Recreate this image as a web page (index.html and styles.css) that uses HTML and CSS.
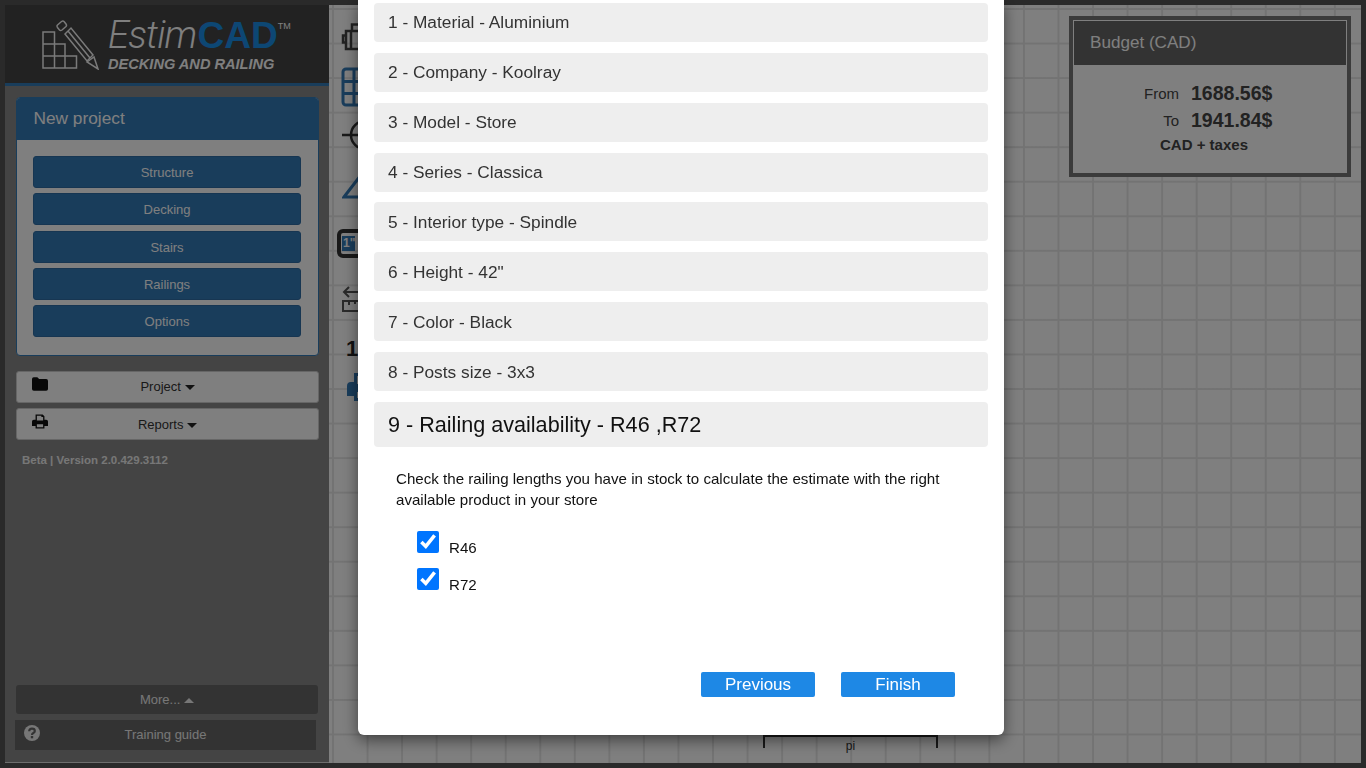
FILE: index.html
```html
<!DOCTYPE html>
<html lang="en">
<head>
    <meta charset="UTF-8">
    <meta name="viewport" content="width=device-width, initial-scale=1.0">
    <title>EstimCAD - Decking and railing</title>
    <link rel="stylesheet" href="styles.css">
</head>
<body>
    <div class="app">
        <aside class="sidebar">
            <header class="logo">
                <svg class="logo-mark" viewBox="0 0 58 50" width="58" height="50" fill="none" stroke="currentColor" stroke-width="1.500">
                    <path d="M1 12h11.500v36H1zM1 24h22v24M1 36h33.500v12H1M12.500 24v24M23 36v12"/>
                    <path d="M15.500 5l4-3.500q1.500-1 2.500 0l2 2.500q1 1.500 0 2.500l-4 3.500q-1.500 1-2.500 0l-2-2.500q-1-1.500 0-2.500z"/>
                    <path d="M23 14l6-6 22 27-6 6zM26 11l22 27"/>
                    <path d="M45 42l7-5 4 12z"/>
                </svg>
                <div class="logo-text">
                    <div class="logo-name">Estim<b>CAD</b><sup>TM</sup></div>
                    <div class="logo-sub">DECKING AND RAILING</div>
                </div>
            </header>

            <section class="panel">
                <div class="panel-heading">New project</div>
                <div class="panel-body">
                    <a class="btn-primary">Structure</a>
                    <a class="btn-primary">Decking</a>
                    <a class="btn-primary">Stairs</a>
                    <a class="btn-primary">Railings</a>
                    <a class="btn-primary">Options</a>
                </div>
            </section>

            <a class="btn-default">
                <svg class="btn-icon" viewBox="0 0 18 15" width="16" height="14"><path fill="currentColor" d="M0 2q0-2 2-2h4l2 2h8q2 0 2 2v9q0 2-2 2H2q-2 0-2-2z"/></svg>
                Project <span class="caret"></span>
            </a>
            <a class="btn-default btn-reports">
                <svg class="btn-icon" viewBox="0 0 18 16" width="16" height="15"><path fill="currentColor" fill-rule="evenodd" d="M4 0h8l2 2v4h2q2 0 2 2v5h-4v3H4v-3H0V8q0-2 2-2h2zM5.500 1.500V7h7V3h-2V1.500zM5.500 11v3.500h7V11z"/></svg>
                Reports <span class="caret"></span>
            </a>
            <div class="version">Beta | Version 2.0.429.3112</div>

            <a class="btn-dark btn-more">More... <span class="caret caret-up"></span></a>
            <a class="btn-dark btn-training">
                <svg class="help-icon" viewBox="0 0 16 16" width="16" height="16"><circle cx="8" cy="8" r="8" fill="currentColor"/><path fill="none" stroke="#666" stroke-width="2.200" d="M5.200 6.200q0-2.500 2.800-2.500t2.800 2.300q0 1.300-1.500 2.100Q8 8.700 8 10"/><rect x="6.800" y="11" width="2.400" height="2.300" fill="#666"/></svg>
                Training guide
            </a>
        </aside>

        <main class="canvas">
            <div class="toolbar">
                <svg class="tool tool-device" viewBox="0 0 40 28" width="40" height="28" fill="none" stroke="#444" stroke-width="2.500"><path d="M5 8h28v18H5zM5 12.500H2v7h3M11 8V1.500h16V8M10 8v18"/></svg>
                <svg class="tool tool-grid" viewBox="0 0 40 40" width="40" height="40" fill="none" stroke="#337ab7" stroke-width="3"><rect x="2" y="2" width="36" height="36" rx="3"/><path d="M2 14.500h36M2 26.500h36M13 2v36M26 2v36"/></svg>
                <svg class="tool tool-circle" viewBox="0 0 40 32" width="40" height="32" fill="none" stroke="#333" stroke-width="2.500"><circle cx="24" cy="16" r="14"/><path d="M1 16h36M24 2v28"/></svg>
                <svg class="tool tool-triangle" viewBox="0 0 40 30" width="40" height="30" fill="none" stroke="#337ab7" stroke-width="3"><path d="M2 27L22 1v26z"/></svg>
                <div class="tool tool-unit"><span>1"</span></div>
                <svg class="tool tool-ruler" viewBox="0 0 40 28" width="40" height="28" fill="none" stroke="#555" stroke-width="2"><path d="M2 6h36M7 1L2 6l5 5M1 15h38v10H1zM7 15v4M13 15v3M19 15v4M25 15v3"/></svg>
                <div class="tool tool-scale">1:4</div>
                <svg class="tool tool-print" viewBox="0 0 40 28" width="40" height="28"><path fill="#337ab7" fill-rule="evenodd" d="M7 0h22v9h5q4 0 4 4v10h-8v5H7v-5H0V13q0-4 4-4h3zM10 3v8h16V3zM10 19v6h16v-6z"/></svg>
            </div>

            <section class="budget">
                <div class="budget-heading">Budget (CAD)</div>
                <div class="budget-row"><span>From</span><b>1688.56$</b></div>
                <div class="budget-row"><span>To</span><b>1941.84$</b></div>
                <div class="budget-note">CAD + taxes</div>
            </section>

            <div class="dimension"><span>pi</span></div>
        </main>
    </div>

    <div class="overlay">
        <div class="modal">
            <div class="step">1 - Material - Aluminium</div>
            <div class="step">2 - Company - Koolray</div>
            <div class="step">3 - Model - Store</div>
            <div class="step">4 - Series - Classica</div>
            <div class="step step-low">5 - Interior type - Spindle</div>
            <div class="step step-low">6 - Height - 42"</div>
            <div class="step step-low">7 - Color - Black</div>
            <div class="step step-low">8 - Posts size - 3x3</div>
            <div class="step step-active">9 - Railing availability - R46 ,R72</div>

            <div class="step-content">
                <p>Check the railing lengths you have in stock to calculate the estimate with the right available product in your store</p>
                <label class="check"><input type="checkbox" checked><span>R46</span></label>
                <label class="check"><input type="checkbox" checked><span>R72</span></label>
            </div>

            <div class="actions">
                <button class="btn-modal">Previous</button>
                <button class="btn-modal">Finish</button>
            </div>
        </div>
    </div>
</body>
</html>
```

FILE: styles.css
```css
* {
    box-sizing: border-box;
}
body {
    font-family: "Liberation Sans", Arial, sans-serif;
    background-color: #555;
    color: #333;
    margin: 0;
    height: 768px;
    overflow: hidden;
}
.app {
    display: flex;
    height: 763px;
    padding: 5px 5px 0;
}

/* left column */
.sidebar {
    width: 324px;
    flex: none;
    display: flex;
    flex-direction: column;
    background-color: #888;
    border-bottom: 1px solid #ddd;
    font-size: 13px;
}
.logo {
    height: 81px;
    flex: none;
    display: flex;
    background-color: #444;
    border-bottom: 3px solid #337ab7;
    color: #fff;
}
.logo-mark {
    margin: 15px 0 0 37px;
    color: #f4f4f4;
}
.logo-text {
    margin-left: 8px;
}
.logo-name {
    font-family: Roboto, "Liberation Sans", sans-serif;
    font-size: 38px;
    font-weight: 300;
    font-style: italic;
    letter-spacing: -0.800px;
    line-height: 42px;
    margin-top: 9px;
    white-space: nowrap;
}
.logo-name b {
    font-family: "Liberation Sans", Arial, sans-serif;
    font-style: normal;
    font-weight: bold;
    color: #1b8fe8;
    font-size: 37px;
    letter-spacing: 0;
    margin-left: 1px;
}
.logo-name sup {
    font-family: "Liberation Sans", Arial, sans-serif;
    font-size: 9px;
    font-style: normal;
    font-weight: normal;
    letter-spacing: 0;
    vertical-align: 19px;
    line-height: 0;
}
.logo-sub {
    font-size: 14.600px;
    font-weight: bold;
    font-style: italic;
    line-height: 16px;
    margin-top: -1px;
    white-space: nowrap;
}
.panel {
    margin: 11px 10px 0 11px;
    height: 259px;
    flex: none;
    background-color: #fff;
    border: 1px solid #337ab7;
    border-radius: 4px;
}
.panel-heading {
    height: 42px;
    padding: 0 16.500px;
    background-color: #337ab7;
    color: #fff;
    font-size: 17.300px;
    line-height: 41px;
    border-radius: 3px 3px 0 0;
}
.panel-body {
    display: flex;
    flex-direction: column;
    gap: 5.250px;
    padding: 16px 17px 16px 16px;
}
.btn-primary {
    height: 32px;
    line-height: 32px;
    text-align: center;
    color: #fff;
    background-color: #337ab7;
    border: 1px solid #2e6da4;
    border-radius: 3px;
}
.btn-default {
    position: relative;
    height: 32px;
    flex: none;
    margin: 15px 10px 0 11px;
    line-height: 30px;
    text-align: center;
    background-color: #fff;
    border: 1px solid #ccc;
    border-radius: 3px;
    color: #333;
}
.btn-reports {
    margin-top: 5px;
    padding-top: 1px;
}
.btn-icon {
    position: absolute;
    left: 15px;
    top: 5px;
    color: #111;
}
.caret {
    display: inline-block;
    width: 0;
    height: 0;
    vertical-align: 1px;
    border-left: 5px solid transparent;
    border-right: 5px solid transparent;
    border-top: 5px solid #222;
}
.caret-up {
    border-top: 0;
    border-bottom: 5px solid #eee;
}
.version {
    margin: 14px 0 0 17px;
    font-size: 11.500px;
    font-weight: bold;
    color: #eee;
}
.btn-dark {
    flex: none;
    display: block;
    position: relative;
    text-align: center;
    color: #eee;
    background-color: #666;
}
.btn-more {
    margin: auto 11px 0 11px;
    height: 29px;
    line-height: 29px;
    border-radius: 3px;
}
.btn-training {
    margin: 6px 13px 12px 10px;
    height: 30px;
    line-height: 30px;
}
.help-icon {
    position: absolute;
    left: 9px;
    top: 5px;
    color: #eee;
}

/* drawing area */
.canvas {
    flex: 1;
    position: relative;
    overflow: hidden;
    background-color: #fff;
    background-image:
        linear-gradient(to right, #ececec 0, #e2e2e2 1px, #ececec 2px, transparent 2px),
        linear-gradient(to bottom, #ececec 0, #e2e2e2 1px, #ececec 2px, transparent 2px);
    background-size: 34.560px 34.560px;
    background-position: 3px 3px;
}
.toolbar {
    display: flex;
    flex-direction: column;
    align-items: flex-start;
    padding: 0 0 0 12px;
}
.tool {
    flex: none;
}
.tool-device {
    margin-top: 18px;
}
.tool-grid {
    margin-top: 16px;
}
.tool-circle {
    margin-top: 12px;
}
.tool-triangle {
    margin-top: 19px;
    margin-left: 1px;
}
.tool-unit {
    width: 50px;
    height: 29px;
    margin: 29px 0 0 -4px;
    border: 4px solid #333;
    border-radius: 6px;
    padding: 3px 1px;
}
.tool-unit span {
    display: block;
    width: 13px;
    height: 15px;
    background-color: #337ab7;
    color: #fff;
    font-size: 12px;
    font-weight: bold;
    line-height: 15px;
    padding-left: 1px;
}
.tool-ruler {
    margin-top: 28px;
    margin-left: 1px;
}
.tool-scale {
    margin: 22px 0 0 5px;
    font-size: 22px;
    font-weight: bold;
    line-height: 26px;
    color: #222;
}
.tool-print {
    margin: 11px 0 0 6px;
}
.budget {
    position: absolute;
    top: 11px;
    right: 10px;
    width: 282px;
    height: 161px;
    background-color: #fff;
    border: 4px solid #777;
    outline: 1px solid #fff;
    outline-offset: -5px;
}
.budget-heading {
    height: 44px;
    margin: 1px 1px 15px;
    padding-left: 16px;
    background-color: #666;
    color: #fff;
    font-size: 17.100px;
    line-height: 43px;
}
.budget-row {
    display: grid;
    grid-template-columns: 106px 1fr;
    column-gap: 12px;
    align-items: center;
    height: 27px;
    line-height: 27px;
    font-size: 15px;
    color: #444;
}
.budget-row span {
    text-align: right;
}
.budget-row b {
    font-size: 19.500px;
}
.budget-note {
    font-size: 15px;
    font-weight: bold;
    line-height: 20px;
    text-align: center;
    padding-right: 12px;
    margin-top: 1px;
    color: #444;
}
.dimension {
    position: absolute;
    left: 434px;
    top: 730px;
    width: 175px;
    height: 13px;
    border: 2px solid #333;
    border-bottom: 0;
    text-align: center;
    font-size: 12px;
    line-height: 18px;
}

/* wizard */
.overlay {
    position: fixed;
    top: 0;
    left: 0;
    right: 0;
    bottom: 0;
    background-color: rgba(0, 0, 0, 0.5);
}
.modal {
    width: 646px;
    height: 735px;
    margin-left: 358px;
    padding: 2.850px 16px 0;
    display: flex;
    flex-direction: column;
    gap: 10.900px;
    background-color: #fff;
    border-radius: 0 0 6px 6px;
    box-shadow: 0 5px 15px rgba(0, 0, 0, 0.5);
}
.step {
    height: 39px;
    flex: none;
    padding: 0 14px;
    background-color: #eee;
    border-radius: 4px;
    font-size: 17.300px;
    line-height: 39px;
    color: #333;
}
.step-low {
    padding-top: 1px;
}
.step-active {
    height: 45px;
    font-size: 21.600px;
    line-height: 45px;
    color: #111;
}
.step-content {
    padding: 10px 22px 0;
    font-size: 15.120px;
    color: #111;
}
.step-content p {
    margin: 0 0 21px;
    line-height: 21px;
}
.check {
    display: flex;
    align-items: flex-end;
    gap: 10px;
    margin: 0 0 12px 21px;
    height: 25px;
}
.check input {
    width: 22px;
    height: 22px;
    margin: 0 0 3px;
}
.check span {
    line-height: 17px;
}
.actions {
    display: flex;
    justify-content: flex-end;
    gap: 26px;
    margin-top: auto;
    padding: 0 33px 38px 0;
}
.btn-modal {
    width: 114px;
    height: 25px;
    padding: 0;
    border: 0;
    border-radius: 2px;
    background-color: #1e88e5;
    color: #fff;
    font-family: inherit;
    font-size: 17px;
}
```
